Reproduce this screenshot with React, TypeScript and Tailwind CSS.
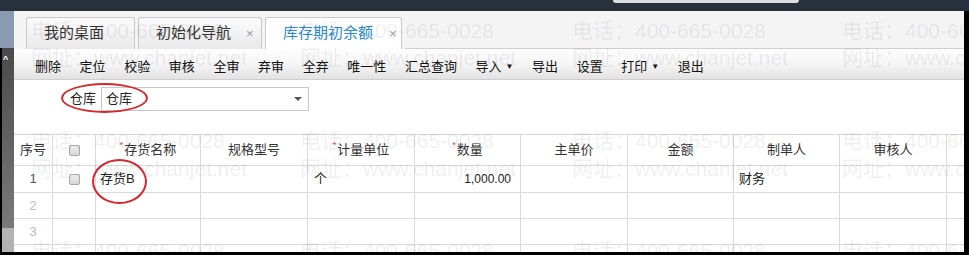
import React from "react";

const cols = "grid grid-cols-[39px_43px_105px_107px_107px_106px_107px_106px_106px_107px_1fr]";

function Check() {
  return (
    <span className="block w-[11px] h-[11px] rounded-[2px] border border-[#a8a8a8] bg-gradient-to-b from-[#f0f0f0] to-[#d6d6d6]" />
  );
}

function Req() {
  return <span className="text-[#e53935] text-[9px] relative -top-[4px] mr-[1px]">*</span>;
}

const headers: { t: string; req?: boolean }[] = [
  { t: "存货名称", req: true },
  { t: "规格型号" },
  { t: "计量单位", req: true },
  { t: "数量", req: true },
  { t: "主单价" },
  { t: "金额" },
  { t: "制单人" },
  { t: "审核人" },
];

const toolbar: { t: string; dd?: boolean }[] = [
  { t: "删除" },
  { t: "定位" },
  { t: "校验" },
  { t: "审核" },
  { t: "全审" },
  { t: "弃审" },
  { t: "全弃" },
  { t: "唯一性" },
  { t: "汇总查询" },
  { t: "导入", dd: true },
  { t: "导出" },
  { t: "设置" },
  { t: "打印", dd: true },
  { t: "退出" },
];

const wmX = [31, 300, 572, 842];
const wmRows: { y: number; t: string }[] = [
  { y: 20, t: "电话：400-665-0028" },
  { y: 47, t: "网址：www.chanjet.net" },
  { y: 130, t: "电话：400-665-0028" },
  { y: 158, t: "网址：www.chanjet.net" },
  { y: 240, t: "电话：400-665-0028" },
];

function Cell({ children, className = "" }: { children?: React.ReactNode; className?: string }) {
  return <div className={`border-r border-b border-[#dadada] flex items-center ${className}`}>{children}</div>;
}

function DataRow({ n, h, filled, hideNum }: { n: number; h: string; filled?: boolean; hideNum?: boolean }) {
  return (
    <div className={`${cols} ${h} shrink-0 text-[13px]`}>
      <Cell className={`justify-center ${filled ? "text-[#555]" : "text-[#bbb]"}`}>{hideNum ? null : n}</Cell>
      <Cell className="justify-center">{filled ? <Check /> : null}</Cell>
      <Cell className="pl-[4px] text-[#222]">{filled ? "存货B" : null}</Cell>
      <Cell />
      <Cell className="pl-[6px] text-[#222]">{filled ? "个" : null}</Cell>
      <Cell className="justify-end pr-[9px] text-[#222] text-[12px]">{filled ? "1,000.00" : null}</Cell>
      <Cell />
      <Cell />
      <Cell className="pl-[5px] text-[#222]">{filled ? "财务" : null}</Cell>
      <Cell />
      <div className="border-b border-[#dadada]" />
    </div>
  );
}

export default function App() {
  return (
    <div className="relative w-[969px] h-[255px] overflow-hidden bg-black font-['Liberation_Sans','Noto_Sans_CJK_SC',sans-serif]">
      {/* top dark bar */}
      <div className="relative h-[11px] bg-[#27303c]">
        <div className="absolute left-[613px] top-0 w-[186px] h-[3px] rounded-b-[3px] bg-[#dcdcdc]" />
      </div>
      <div className="flex h-[241px]">
        {/* left strip */}
        <div className="w-[14px] shrink-0 flex flex-col">
          <div className="h-[37px] shrink-0 bg-[#8a9ab3]" />
          <div className="flex-1 flex border-l-2 border-black bg-gradient-to-b from-[#4a4a4a] to-[#7a7a7a]">
            <span className="text-white text-[9px] leading-none pl-[1px] pt-[7px] font-bold">^</span>
          </div>
          <div className="h-[24px] shrink-0 border-l-2 border-black bg-[#b3b3b3]" />
        </div>
        {/* main */}
        <div className="w-[950px] shrink-0 bg-white flex flex-col overflow-hidden">
          {/* tab bar */}
          <div className="h-[38px] shrink-0 bg-[#f4f4f4] flex items-end pl-[12px] gap-[3px]">
            <div className="h-[32px] w-[109px] pl-[17px] flex items-center rounded-t-[3px] border border-b-0 border-[#c8c8c8] bg-gradient-to-b from-[#fbfbfb] to-[#e9e9e9] text-[15px] text-[#333]">
              我的桌面
            </div>
            <div className="h-[32px] w-[124px] pl-[17px] flex items-center rounded-t-[3px] border border-b-0 border-[#c8c8c8] bg-gradient-to-b from-[#fbfbfb] to-[#e9e9e9] text-[15px] text-[#333]">
              初始化导航<span className="ml-[15px] text-[13px] text-[#999]">×</span>
            </div>
            <div className="h-[32px] w-[137px] pl-[17px] flex items-center rounded-t-[3px] border border-b-0 border-[#c8c8c8] bg-white text-[15px] text-[#2b8ad3]">
              库存期初余额<span className="ml-[16px] text-[13px] text-[#999]">×</span>
            </div>
            <div className="flex-1 h-[1px] bg-[#cfcfcf]" />
          </div>
          {/* toolbar */}
          <div className="h-[31px] shrink-0 border-b border-[#cfcfcf] bg-gradient-to-b from-[#fdfdfd] via-[#f5f5f5] to-[#e2e2e2] flex items-center pl-[21px] pt-[6px] gap-[18.6px] text-[13px] text-[#111]">
            {toolbar.map((b) => (
              <span key={b.t} className="flex items-center">
                {b.t}
                {b.dd ? <span className="ml-[4px] text-[8px]">▼</span> : null}
              </span>
            ))}
          </div>
          {/* filter area */}
          <div className="h-[54px] shrink-0 flex items-start pl-[56px] pt-[7px] text-[13px] text-[#222]">
            <span className="h-[24px] flex items-center">仓库</span>
            <div className="ml-[5px] w-[208px] h-[24px] border border-[#c8c8c8] flex items-center pl-[4px] pr-[6px] justify-between">
              <span>仓库</span>
              <span className="w-0 h-0 border-l-[4px] border-r-[4px] border-t-[4px] border-l-transparent border-r-transparent border-t-[#555]" />
            </div>
          </div>
          {/* table */}
          <div className="shrink-0 border-t border-[#d6d6d6]">
            <div className={`${cols} h-[31px] text-[13px] text-[#333]`}>
              <Cell className="justify-center">序号</Cell>
              <Cell className="justify-center"><Check /></Cell>
              {headers.map((h) => (
                <Cell key={h.t} className="justify-center">
                  {h.req ? <Req /> : null}
                  {h.t}
                </Cell>
              ))}
              <div className="border-b border-[#dadada]" />
            </div>
            <DataRow n={1} h="h-[27px]" filled />
            <DataRow n={2} h="h-[26px]" />
            <DataRow n={3} h="h-[26px]" />
            <DataRow n={4} h="h-[26px]" hideNum />
          </div>
        </div>
        <div className="w-[5px] shrink-0 bg-black" />
      </div>

      {/* watermark overlay */}
      <div className="absolute inset-0 pointer-events-none text-[21px] text-[rgba(0,0,0,0.08)] whitespace-nowrap">
        {wmRows.map((r, i) =>
          wmX.map((x) => (
            <span key={`${i}-${x}`} className="absolute leading-none" style={{ left: x, top: r.y }}>
              {r.t}
            </span>
          ))
        )}
      </div>

      {/* red annotation ellipses */}
      <div className="absolute left-[61px] top-[83px] w-[87px] h-[30px] rounded-[50%] border-2 border-[#d8262c]" />
      <div className="absolute left-[92px] top-[159px] w-[55px] h-[45px] rounded-[50%] border-2 border-[#d8262c]" />
      <div className="absolute left-0 bottom-0 w-full h-[3px] bg-black" />
    </div>
  );
}
